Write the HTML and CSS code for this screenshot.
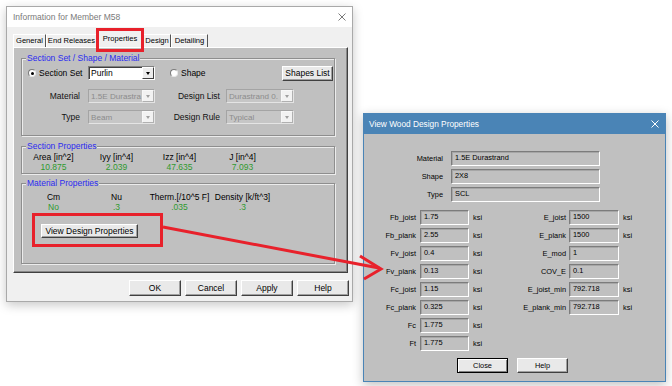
FILE: index.html
```html
<!DOCTYPE html>
<html lang="en">

<head>
    <meta charset="UTF-8">
    <title>Member M58 - Wood Design Properties</title>
    <link rel="stylesheet" href="styles.css">
</head>

<body>
    <div class="desk">
        <!-- 左边：构件信息对话框 -->
        <div class="win win-info">
            <div class="title-bar">
                <span class="title">Information for Member M58</span>
                <svg class="close" width="8" height="8" viewBox="0 0 8 8">
                    <path d="M0.5 0.5L7.5 7.5M7.5 0.5L0.5 7.5" stroke="#7a7a7a" stroke-width="1" fill="none" />
                </svg>
            </div>
            <div class="client">
                <ul class="tabs">
                    <li class="tab t-general">General</li>
                    <li class="tab t-end">End Releases</li>
                    <li class="tab t-props current">Properties</li>
                    <li class="tab t-design">Design</li>
                    <li class="tab t-detail">Detailing</li>
                </ul>
                <div class="panel">
                    <fieldset class="group g-shape">
                        <legend>Section Set / Shape / Material</legend>
                        <div class="row row-first">
                            <span class="radio-label"><span class="radio on"></span>Section Set</span>
                            <div class="combo">
                                <span class="combo-text">Purlin</span>
                                <span class="combo-btn"></span>
                            </div>
                            <span class="radio-label r-shape"><span class="radio"></span>Shape</span>
                            <button class="btn btn-shapes">Shapes List</button>
                        </div>
                        <div class="row row-mat">
                            <span class="lbl">Material</span>
                            <div class="combo off">
                                <span class="combo-text">1.5E Durastra</span>
                                <span class="combo-btn"></span>
                            </div>
                            <span class="lbl lbl-right">Design List</span>
                            <div class="combo off combo-wide">
                                <span class="combo-text">Durastrand 0.</span>
                                <span class="combo-btn"></span>
                            </div>
                        </div>
                        <div class="row row-type">
                            <span class="lbl">Type</span>
                            <div class="combo off">
                                <span class="combo-text">Beam</span>
                                <span class="combo-btn"></span>
                            </div>
                            <span class="lbl lbl-right">Design Rule</span>
                            <div class="combo off combo-wide">
                                <span class="combo-text">Typical</span>
                                <span class="combo-btn"></span>
                            </div>
                        </div>
                    </fieldset>

                    <fieldset class="group g-section">
                        <legend>Section Properties</legend>
                        <div class="props">
                            <span>Area [in^2]</span>
                            <span>Iyy [in^4]</span>
                            <span>Izz [in^4]</span>
                            <span>J [in^4]</span>
                            <span class="val">10.875</span>
                            <span class="val">2.039</span>
                            <span class="val">47.635</span>
                            <span class="val">7.093</span>
                        </div>
                    </fieldset>

                    <fieldset class="group g-material">
                        <legend>Material Properties</legend>
                        <div class="props">
                            <span>Cm</span>
                            <span>Nu</span>
                            <span>Therm.[/10^5 F]</span>
                            <span>Density [k/ft^3]</span>
                            <span class="val">No</span>
                            <span class="val">.3</span>
                            <span class="val">.035</span>
                            <span class="val">.3</span>
                        </div>
                        <button class="btn btn-view">View Design Properties</button>
                    </fieldset>
                </div>
                <div class="actions">
                    <button class="btn">OK</button>
                    <button class="btn">Cancel</button>
                    <button class="btn">Apply</button>
                    <button class="btn">Help</button>
                </div>
            </div>
        </div>

        <!-- 右边：木材设计属性对话框 -->
        <div class="win win-wood">
            <div class="wood-bar">
                <span>View Wood Design Properties</span>
                <svg width="8" height="8" viewBox="0 0 8 8">
                    <path d="M0.5 0.5L7.5 7.5M7.5 0.5L0.5 7.5" stroke="#fff" stroke-width="1" fill="none" />
                </svg>
            </div>
            <div class="wood-body">
                <div class="wood-info">
                    <span class="w-lbl">Material</span>
                    <span class="fld">1.5E Durastrand</span>
                    <span class="w-lbl">Shape</span>
                    <span class="fld">2X8</span>
                    <span class="w-lbl">Type</span>
                    <span class="fld">SCL</span>
                </div>
                <div class="wood-params">
                    <span class="p-lbl">Fb_joist</span><span class="fld">1.75</span><span class="unit">ksi</span>
                    <span class="p-lbl p-lbl2">E_joist</span><span class="fld">1500</span><span class="unit">ksi</span>

                    <span class="p-lbl">Fb_plank</span><span class="fld">2.55</span><span class="unit">ksi</span>
                    <span class="p-lbl p-lbl2">E_plank</span><span class="fld">1500</span><span class="unit">ksi</span>

                    <span class="p-lbl">Fv_joist</span><span class="fld">0.4</span><span class="unit">ksi</span>
                    <span class="p-lbl p-lbl2">E_mod</span><span class="fld">1</span><span></span>

                    <span class="p-lbl">Fv_plank</span><span class="fld">0.13</span><span class="unit">ksi</span>
                    <span class="p-lbl p-lbl2">COV_E</span><span class="fld">0.1</span><span></span>

                    <span class="p-lbl">Fc_joist</span><span class="fld">1.15</span><span class="unit">ksi</span>
                    <span class="p-lbl p-lbl2">E_joist_min</span><span class="fld">792.718</span><span class="unit">ksi</span>

                    <span class="p-lbl">Fc_plank</span><span class="fld">0.325</span><span class="unit">ksi</span>
                    <span class="p-lbl p-lbl2">E_plank_min</span><span class="fld">792.718</span><span class="unit">ksi</span>

                    <span class="p-lbl">Fc</span><span class="fld">1.775</span><span class="unit">ksi</span>
                    <span></span><span></span><span></span>

                    <span class="p-lbl">Ft</span><span class="fld">1.775</span><span class="unit">ksi</span>
                    <span></span><span></span><span></span>
                </div>
                <div class="wood-actions">
                    <button class="btn default">Close</button>
                    <button class="btn">Help</button>
                </div>
            </div>
        </div>

        <!-- 红色标注：框 + 箭头 -->
        <div class="mark mark-tab"></div>
        <div class="mark mark-btn"></div>
        <svg class="arrow" width="672" height="386" viewBox="0 0 672 386">
            <path d="M163 227L379 268" stroke="#e8212b" stroke-width="3" fill="none" />
            <path d="M360 256L381 269L364 279" stroke="#e8212b" stroke-width="3" fill="none" stroke-linejoin="miter" />
        </svg>
    </div>
</body>

</html>
```

FILE: styles.css
```css
body,
ul,
fieldset,
legend {
    margin: 0;
}

ul {
    list-style: none;
    padding: 0;
}

body {
    background: #fff;
    font-family: "Liberation Sans", Arial, sans-serif;
    color: #000;
}

.desk {
    position: relative;
    width: 672px;
    height: 386px;
    overflow: hidden;
}

/* 窗口 */
.win {
    position: absolute;
    box-sizing: border-box;
    display: flex;
    flex-direction: column;
}

.win-info {
    left: 6px;
    top: 6px;
    width: 347px;
    height: 296px;
    border: 1px solid #a9a9a9;
    box-shadow: 0 3px 10px rgba(0, 0, 0, .22);
}

.title-bar {
    height: 20px;
    flex-shrink: 0;
    display: flex;
    align-items: center;
    justify-content: space-between;
    padding: 0 6px;
    background: #fff;
    font-size: 8.5px;
    color: #7a7a7a;
}

.client {
    flex: 1;
    display: flex;
    flex-direction: column;
    padding: 3px 3px 5px 6px;
    background: #f0f0f0;
}

/* 选项卡 */
.tabs {
    display: flex;
    align-items: flex-end;
    height: 17px;
}

.tab {
    height: 13px;
    box-sizing: border-box;
    border-top: 1px solid #fff;
    border-left: 1px solid #fff;
    border-right: 1px solid #555;
    font-size: 7.6px;
    line-height: 12px;
    text-align: center;
    white-space: nowrap;
}

.t-general {
    width: 33px;
}

.t-end {
    width: 51px;
}

.t-props {
    width: 46px;
}

.t-design {
    width: 28px;
}

.t-detail {
    width: 37px;
}

.tab.current {
    height: 17px;
    line-height: 16px;
}

.panel {
    height: 226px;
    box-sizing: border-box;
    margin-right: 1px;
    padding: 5px 12px 0 7px;
    background: #c0c0c0;
    border: 1px solid;
    border-color: #fff #404040 #404040 #fff;
    box-shadow: inset -1px -1px #888;
}

/* 分组框 */
.group {
    padding: 0;
    min-width: 0;
    border: 1px solid #8e8e8e;
    box-shadow: inset 1px 1px #ececec, 1px 1px #ececec;
}

.group legend {
    margin-left: 4px;
    padding: 0 1px;
    font-size: 8.5px;
    line-height: 10px;
    color: #2b2bf0;
    background: #c0c0c0;
}

.g-section {
    margin-top: 5px;
}

.g-material {
    margin-top: 4px;
}

.row {
    display: flex;
    align-items: center;
    font-size: 8.5px;
}

.row-first {
    height: 16px;
    margin-top: 2px;
}

.row-mat {
    height: 14px;
    margin-top: 8px;
}

.row-type {
    height: 14px;
    margin-top: 7px;
    margin-bottom: 11px;
}

.radio-label {
    display: flex;
    align-items: center;
    gap: 3px;
    width: 60px;
    margin-left: 6px;
    white-space: nowrap;
}

.r-shape {
    width: auto;
    margin-left: 15px;
}

.radio {
    width: 8px;
    height: 8px;
    box-sizing: border-box;
    border: 1px solid;
    border-color: #7a7a7a #e8e8e8 #e8e8e8 #7a7a7a;
    border-radius: 50%;
    background: #fff;
    display: flex;
    align-items: center;
    justify-content: center;
}

.radio.on::after {
    content: "";
    width: 3px;
    height: 3px;
    border-radius: 50%;
    background: #000;
}

.lbl {
    width: 58px;
    text-align: right;
    margin-right: 8px;
    color: #111;
}

.lbl-right {
    width: 65px;
    margin-right: 6px;
}

/* 下拉框 */
.combo {
    width: 67px;
    height: 14px;
    box-sizing: border-box;
    display: flex;
    border: 1px solid;
    border-color: #808080 #fff #fff #808080;
    box-shadow: inset 1px 1px #404040;
    background: #fff;
}

.combo-wide {
    width: 68px;
}

.combo-text {
    flex: 1;
    overflow: hidden;
    white-space: nowrap;
    padding: 1px 0 0 2px;
    line-height: 11px;
}

.combo-btn {
    width: 12px;
    flex-shrink: 0;
    box-sizing: border-box;
    display: flex;
    align-items: center;
    justify-content: center;
    background: #ececec;
    border: 1px solid;
    border-color: #fff #404040 #404040 #fff;
}

.combo-btn::after {
    content: "";
    border-left: 2.5px solid transparent;
    border-right: 2.5px solid transparent;
    border-top: 3px solid #000;
}

.combo.off {
    background: #c6c6c6;
    color: #8c8c8c;
    border-color: #a4a4a4 #e4e4e4 #e4e4e4 #a4a4a4;
    box-shadow: none;
}

.combo.off .combo-text {
    font-size: 8.1px;
}

.combo.off .combo-btn {
    background: #f2f2f2;
    border-color: #f8f8f8 #b0b0b0 #b0b0b0 #f8f8f8;
}

.combo.off .combo-btn::after {
    border-top-color: #a0a0a0;
}

/* 按钮 */
.btn {
    box-sizing: border-box;
    padding: 0;
    font-family: inherit;
    font-size: 8.5px;
    color: #000;
    background: #e9e9e9;
    border: 1px solid;
    border-color: #fff #404040 #404040 #fff;
    box-shadow: inset -1px -1px #a0a0a0;
}

.btn-shapes {
    width: 51px;
    height: 15px;
    margin-left: auto;
    margin-right: 1px;
}

.props {
    display: grid;
    grid-template-columns: repeat(4, 63px);
    font-size: 8.5px;
    line-height: 10px;
    text-align: center;
    white-space: nowrap;
}

.g-section .props {
    padding: 1px 0 1px;
}

.g-material .props {
    padding-top: 4px;
}

.val {
    color: #2f9a2f;
}

.btn-view {
    display: block;
    width: 97px;
    height: 14px;
    margin: 12px 0 25px 19px;
}

.actions {
    display: flex;
    justify-content: flex-end;
    gap: 4px;
    margin-top: 7px;
}

.actions .btn {
    width: 52px;
    height: 16px;
}

/* 木材设计属性窗口 */
.win-wood {
    left: 363px;
    top: 113px;
    width: 303px;
    height: 269px;
    border: 1px solid #4a84b6;
    box-shadow: 0 3px 10px rgba(0, 0, 0, .25);
}

.wood-bar {
    height: 20px;
    flex-shrink: 0;
    display: flex;
    align-items: center;
    justify-content: space-between;
    padding: 0 6px 0 5px;
    background: #4a84b6;
    color: #fff;
    font-size: 8.3px;
}

.wood-body {
    flex: 1;
    padding-top: 17px;
    background: #c0c0c0;
    font-size: 7.4px;
}

.wood-info {
    display: grid;
    grid-template-columns: 79px 149px;
    column-gap: 8px;
    row-gap: 3px;
}

.w-lbl {
    text-align: right;
    line-height: 15px;
}

.fld {
    height: 15px;
    box-sizing: border-box;
    padding-left: 3px;
    line-height: 12px;
    white-space: nowrap;
    overflow: hidden;
    border: 1px solid;
    border-color: #7c7c7c #fff #fff #7c7c7c;
    box-shadow: inset 1px 1px #a6a6a6;
    background: #c0c0c0;
}

.wood-params {
    display: grid;
    grid-template-columns: 56px 49px 34px 66px 50px auto;
    row-gap: 3px;
    margin-top: 8px;
}

.p-lbl {
    text-align: right;
    padding-right: 4px;
    line-height: 15px;
    white-space: nowrap;
}

.p-lbl2 {
    padding-right: 3px;
}

.unit {
    padding-left: 4px;
    line-height: 15px;
}

.wood-actions {
    display: flex;
    justify-content: center;
    gap: 9px;
    margin-top: 7px;
    padding-right: 4px;
}

.wood-actions .btn {
    width: 51px;
    height: 15px;
    font-size: 7.4px;
}

.wood-actions .btn.default {
    border-color: #000;
    box-shadow: inset 1px 1px #fff, inset -1px -1px #808080;
}

/* 红色标注 */
.mark {
    position: absolute;
    box-sizing: border-box;
    border: 3px solid #e8212b;
}

.mark-tab {
    left: 96px;
    top: 28px;
    width: 48px;
    height: 24px;
}

.mark-btn {
    left: 32px;
    top: 213px;
    width: 131px;
    height: 34px;
}

.arrow {
    position: absolute;
    left: 0;
    top: 0;
    pointer-events: none;
}
```
